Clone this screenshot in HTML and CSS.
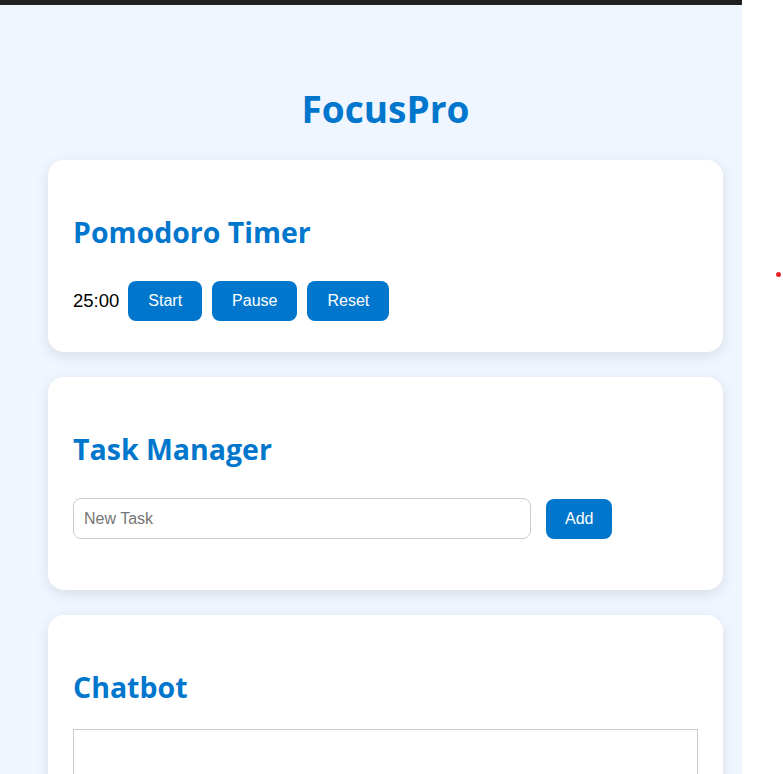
FILE: index.html
```html
<!DOCTYPE html>
<html lang="en">
<head>
    <meta charset="UTF-8">
    <meta name="viewport" content="width=device-width, initial-scale=1.0">
    <title>FocusPro</title>
    <link rel="stylesheet" href="styles.css">
</head>
<body>
    <div class="page">
        <div class="topbar"></div>
        <div class="container">
            <h1>FocusPro</h1>

            <section class="card">
                <h2>Pomodoro Timer</h2>
                <div class="timer-row">
                    <span id="timer" class="timer">25:00</span>
                    <button>Start</button>
                    <button>Pause</button>
                    <button>Reset</button>
                </div>
            </section>

            <section class="card tasks">
                <h2>Task Manager</h2>
                <div class="task-row">
                    <input type="text" id="taskInput" placeholder="New Task">
                    <button>Add</button>
                </div>
                <ul id="taskList"></ul>
            </section>

            <section class="card">
                <h2>Chatbot</h2>
                <div id="chatBox" class="chat-box"></div>
            </section>
        </div>
    </div>
    <span class="dot"></span>
</body>
</html>
```

FILE: styles.css
```css
body {
    margin: 0;
    background: #ffffff;
    font-family: 'Liberation Sans', Arial, sans-serif;
    overflow: hidden;
    height: 774px;
}
.page {
    width: 742px;
    height: 774px;
    overflow: hidden;
    background: #f0f6ff;
}
.topbar {
    height: 5px;
    background: #202020;
}
.container {
    width: 675px;
    margin: 0 0 0 48px;
}
h1 {
    margin: 79px 0 26px;
    text-align: center;
    color: #0077cc;
    font-family: 'Open Sans', sans-serif;
    font-size: 37px;
    font-weight: 700;
    line-height: 50px;
}
.card {
    background: #ffffff;
    border-radius: 16px;
    padding: 25px;
    margin-bottom: 25px;
    box-shadow: 0 4px 14px rgba(0, 0, 0, 0.1);
}
.card h2 {
    margin: 28px 0 0;
    color: #0077cc;
    font-family: 'Open Sans', sans-serif;
    font-size: 28.5px;
    font-weight: 700;
    line-height: 38px;
}
.timer-row {
    display: flex;
    align-items: center;
    gap: 10px;
    margin-top: 30px;
    padding-bottom: 6px;
}
.timer {
    font-size: 18.5px;
    margin-right: -1px;
}
button {
    background: #0077cc;
    color: #ffffff;
    border: none;
    border-radius: 8px;
    padding: 11px 20px;
    font-family: 'Liberation Sans', Arial, sans-serif;
    font-size: 16px;
    line-height: 18px;
    cursor: pointer;
}
.task-row {
    display: flex;
    align-items: center;
    gap: 15px;
    margin-top: 30px;
}
.task-row input {
    width: 436px;
    padding: 10px;
    border: 1px solid #cccccc;
    border-radius: 8px;
    font-family: 'Liberation Sans', Arial, sans-serif;
    font-size: 16px;
    line-height: 19px;
}
.task-row input::placeholder {
    color: #757575;
}
.task-row button {
    padding: 11px 19px;
}
#taskList {
    margin: 26px 0 0;
    padding: 0;
}
.chat-box {
    height: 200px;
    border: 1px solid #cccccc;
    margin-top: 23px;
}
.dot {
    position: absolute;
    left: 776px;
    top: 272px;
    width: 5px;
    height: 5px;
    border-radius: 50%;
    background: #e8262a;
}
```
